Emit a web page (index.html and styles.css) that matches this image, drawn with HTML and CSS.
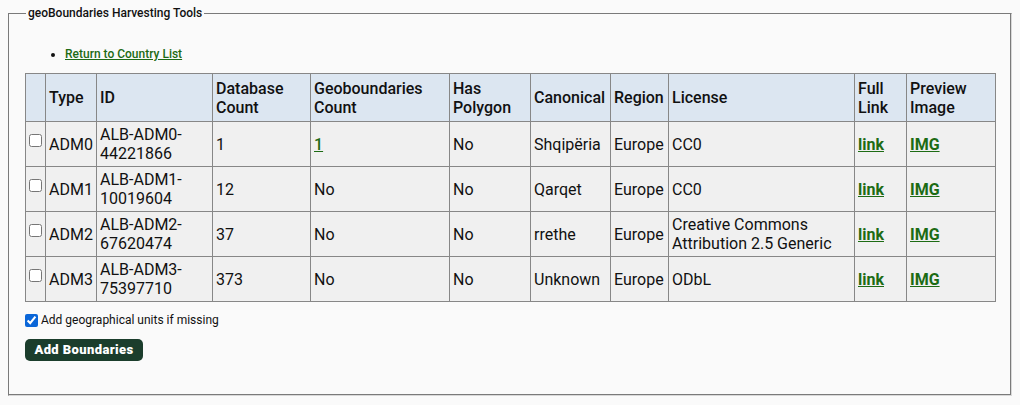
FILE: index.html
```html
<!DOCTYPE html>
<html>
<head>
<meta charset="utf-8">
<link rel="stylesheet" href="styles.css">
</head>
<body>
<fieldset class="panel">
  <legend class="panel-title">geoBoundaries Harvesting Tools</legend>
  <ul class="nav">
    <li><a href="#" class="nav-link">Return to Country List</a></li>
  </ul>
  <table class="grid">
    <colgroup>
      <col class="c-chk"><col class="c-type"><col class="c-id"><col class="c-db"><col class="c-geo"><col class="c-poly"><col class="c-can"><col class="c-reg"><col class="c-lic"><col class="c-full"><col class="c-prev">
    </colgroup>
    <thead>
      <tr>
        <th></th><th>Type</th><th>ID</th><th>Database Count</th><th>Geoboundaries Count</th><th>Has Polygon</th><th>Canonical</th><th>Region</th><th>License</th><th>Full Link</th><th>Preview Image</th>
      </tr>
    </thead>
    <tbody>
      <tr>
        <td class="chk"><input type="checkbox"></td><td>ADM0</td><td>ALB-ADM0-44221866</td><td>1</td><td><a href="#" class="cnt">1</a></td><td>No</td><td>Shqipëria</td><td>Europe</td><td>CC0</td><td><a href="#" class="lnk">link</a></td><td><a href="#" class="lnk">IMG</a></td>
      </tr>
      <tr>
        <td class="chk"><input type="checkbox"></td><td>ADM1</td><td>ALB-ADM1-10019604</td><td>12</td><td>No</td><td>No</td><td>Qarqet</td><td>Europe</td><td>CC0</td><td><a href="#" class="lnk">link</a></td><td><a href="#" class="lnk">IMG</a></td>
      </tr>
      <tr>
        <td class="chk"><input type="checkbox"></td><td>ADM2</td><td>ALB-ADM2-67620474</td><td>37</td><td>No</td><td>No</td><td>rrethe</td><td>Europe</td><td>Creative Commons Attribution 2.5 Generic</td><td><a href="#" class="lnk">link</a></td><td><a href="#" class="lnk">IMG</a></td>
      </tr>
      <tr>
        <td class="chk"><input type="checkbox"></td><td>ADM3</td><td>ALB-ADM3-75397710</td><td>373</td><td>No</td><td>No</td><td>Unknown</td><td>Europe</td><td>ODbL</td><td><a href="#" class="lnk">link</a></td><td><a href="#" class="lnk">IMG</a></td>
      </tr>
    </tbody>
  </table>
  <label class="opt"><input type="checkbox" checked class="opt-box"><span>Add geographical units if missing</span></label>
  <button class="submit" type="button">Add Boundaries</button>
</fieldset>
</body>
</html>
```
FILE: styles.css
```css
html, body {
  background: #fafafa;
}
body {
  margin: 6px 8px 8px 8px;
  font-family: Roboto, "Liberation Sans", sans-serif;
  color: #111;
}
.panel {
  margin: 0;
  padding: 0 15px 34px 16px;
  border-style: solid;
  border-width: 1px;
  border-color: #7a7a7a #d8d8d8 #d8d8d8 #7a7a7a;
  box-shadow: inset -1px -1px 0 #7a7a7a, 1px 1px 0 #d8d8d8;
  min-height: 0;
}
.panel-title {
  font-size: 12px;
  font-weight: 500;
  padding: 0 2px;
  margin-left: 1px;
  line-height: 14px;
}
.nav {
  margin: 27px 0 12px 0;
  padding-left: 40px;
  font-size: 12px;
  line-height: 14px;
}
.nav-link {
  color: #1d6b14;
  font-weight: 500;
}
.grid {
  border-collapse: collapse;
  table-layout: fixed;
  width: 971px;
  font-size: 16px;
  line-height: 19px;
}
.c-chk { width: 20px; }
.c-type { width: 51px; }
.c-id { width: 116px; }
.c-db { width: 98px; }
.c-geo { width: 139px; }
.c-poly { width: 81px; }
.c-can { width: 80px; }
.c-reg { width: 58px; }
.c-lic { width: 186px; }
.c-full { width: 52px; }
.c-prev { width: 89px; }
.grid th, .grid td {
  border: 1px solid #878787;
  text-align: left;
  padding: 0 3px;
  vertical-align: middle;
}
.grid th {
  background: #dce6f1;
  font-weight: 500;
  height: 47px;
}
.grid td {
  background: #f0f0f0;
  height: 44px;
}
.grid td.chk {
  padding: 0 0 0 3px;
}
.grid td.chk input {
  margin: 0;
  width: 13px;
  height: 13px;
  position: relative;
  top: -3px;
}
.cnt {
  color: #1d6b14;
  font-weight: 500;
}
.lnk {
  color: #1d6b14;
  font-weight: 700;
}
.opt {
  display: flex;
  align-items: center;
  margin-top: 11px;
  font-size: 12px;
  line-height: 14px;
}
.opt-box {
  margin: 0 3px 0 0;
  width: 13px;
  height: 13px;
  accent-color: #0a66d8;
}
.submit {
  display: block;
  margin-top: 12px;
  background: #1b3d2c;
  color: #fff;
  border: none;
  border-radius: 5px;
  font-family: Roboto, "Liberation Sans", sans-serif;
  font-weight: 900;
  font-size: 13px;
  letter-spacing: 0.4px;
  line-height: 14px;
  padding: 4px 0;
  width: 118px;
  height: 22px;
}
```
